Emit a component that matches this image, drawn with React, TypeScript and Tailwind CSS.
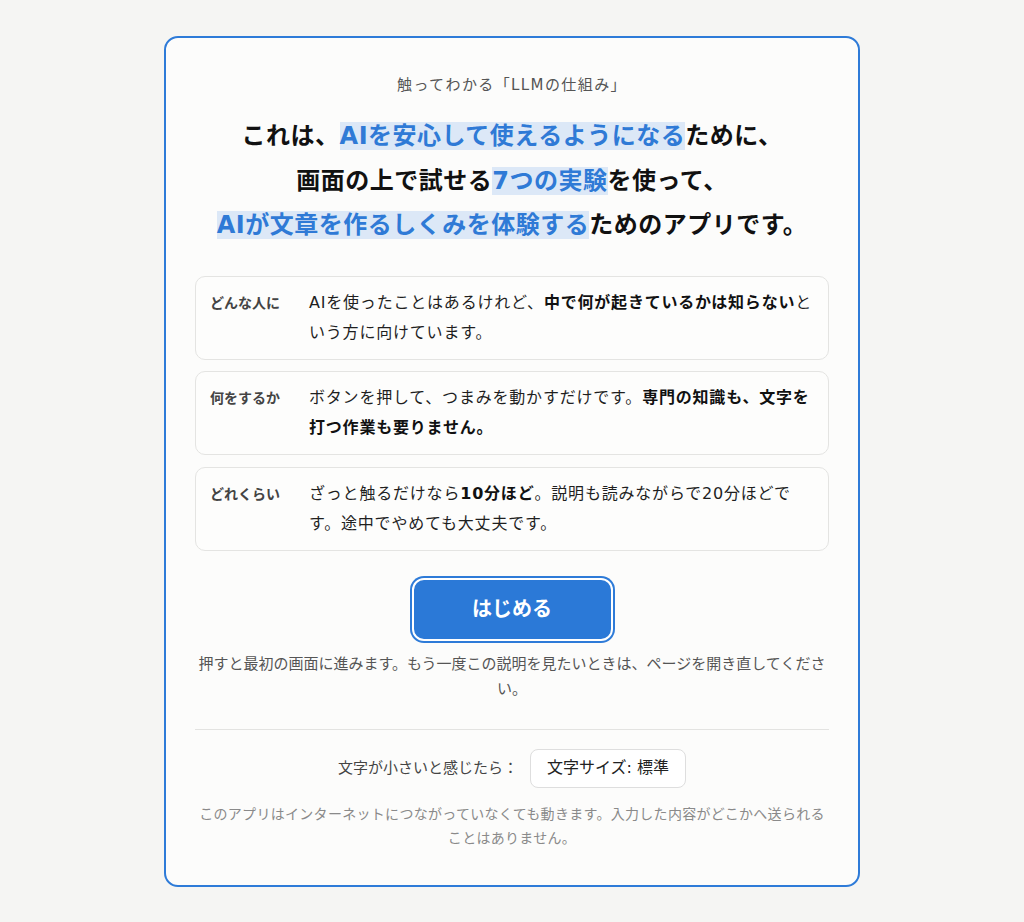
import React from "react";

const FONT = { fontFamily: '"DejaVu Sans", "Noto Sans CJK JP", sans-serif' };

function Hl({ children }: { children: React.ReactNode }) {
  return <span className="bg-[#dce8f7] text-[#2f7ad6]">{children}</span>;
}

function Row({ label, children }: { label: string; children: React.ReactNode }) {
  return (
    <div className="flex rounded-[10px] border border-[#e4e4e2] bg-[#fdfdfc] py-[11px] pl-[14px] pr-[15px]">
      <div className="w-[99px] shrink-0 text-[14px] font-semibold leading-[30px] text-[#444]">{label}</div>
      <div className="flex-1 text-[16px] leading-[30px] tracking-[0.8px] text-[#1f1f1f]">{children}</div>
    </div>
  );
}

export default function App() {
  return (
    <div className="min-h-[922px] bg-[#f5f5f3] pt-[36px]" style={FONT}>
      <div className="mx-auto w-[696px] rounded-[14px] border-2 border-[#2e7bd8] bg-[#fcfcfb] px-[29px] pb-[35px] pt-[35px]">
        <div className="text-center text-[15px] leading-[24px] tracking-[1.4px] text-[#555]">触ってわかる「LLMの仕組み」</div>
        <h1 className="mt-[17px] text-center text-[24px] font-bold leading-[44.5px] tracking-[0.5px] text-[#111]">
          これは、<Hl>AIを安心して使えるようになる</Hl>ために、
          <br />
          画面の上で試せる<Hl>7つの実験</Hl>を使って、
          <br />
          <Hl>AIが文章を作るしくみを体験する</Hl>ためのアプリです。
        </h1>
        <div className="mt-[28px] flex flex-col gap-[11.5px]">
          <Row label="どんな人に">
            AIを使ったことはあるけれど、<b className="font-bold text-[#111]">中で何が起きているかは知らない</b>という方に向けています。
          </Row>
          <Row label="何をするか">
            ボタンを押して、つまみを動かすだけです。<b className="font-bold text-[#111]">専門の知識も、文字を打つ作業も要りません。</b>
          </Row>
          <Row label="どれくらい">
            ざっと触るだけなら<b className="font-bold text-[#111]">10分ほど</b>。説明も読みながらで20分ほどです。途中でやめても大丈夫です。
          </Row>
        </div>
        <div className="mt-[25px] flex justify-center">
          <div className="rounded-[14px] bg-[#2e7bd8] p-[2px]">
            <button className="block h-[63px] w-[201px] rounded-[12px] border-2 border-white bg-[#2b79d7] text-[20px] font-bold text-white">
              はじめる
            </button>
          </div>
        </div>
        <p className="mt-[9px] text-center text-[15px] leading-[25px] text-[#555]">
          押すと最初の画面に進みます。もう一度この説明を見たいときは、ページを開き直してください。
        </p>
        <div className="mt-[27px] h-px bg-[#e3e3e1]" />
        <div className="mt-[19px] flex items-center justify-center gap-[12px]">
          <span className="text-[15px] text-[#444]">文字が小さいと感じたら：</span>
          <button className="h-[39px] rounded-[8px] border border-[#dedede] bg-white px-[16px] text-[16px] text-[#222]">
            文字サイズ: 標準
          </button>
        </div>
        <p className="mt-[14px] text-center text-[14px] leading-[24px] tracking-[0.3px] text-[#8a8a8a]">
          このアプリはインターネットにつながっていなくても動きます。入力した内容がどこかへ送られることはありません。
        </p>
      </div>
    </div>
  );
}
